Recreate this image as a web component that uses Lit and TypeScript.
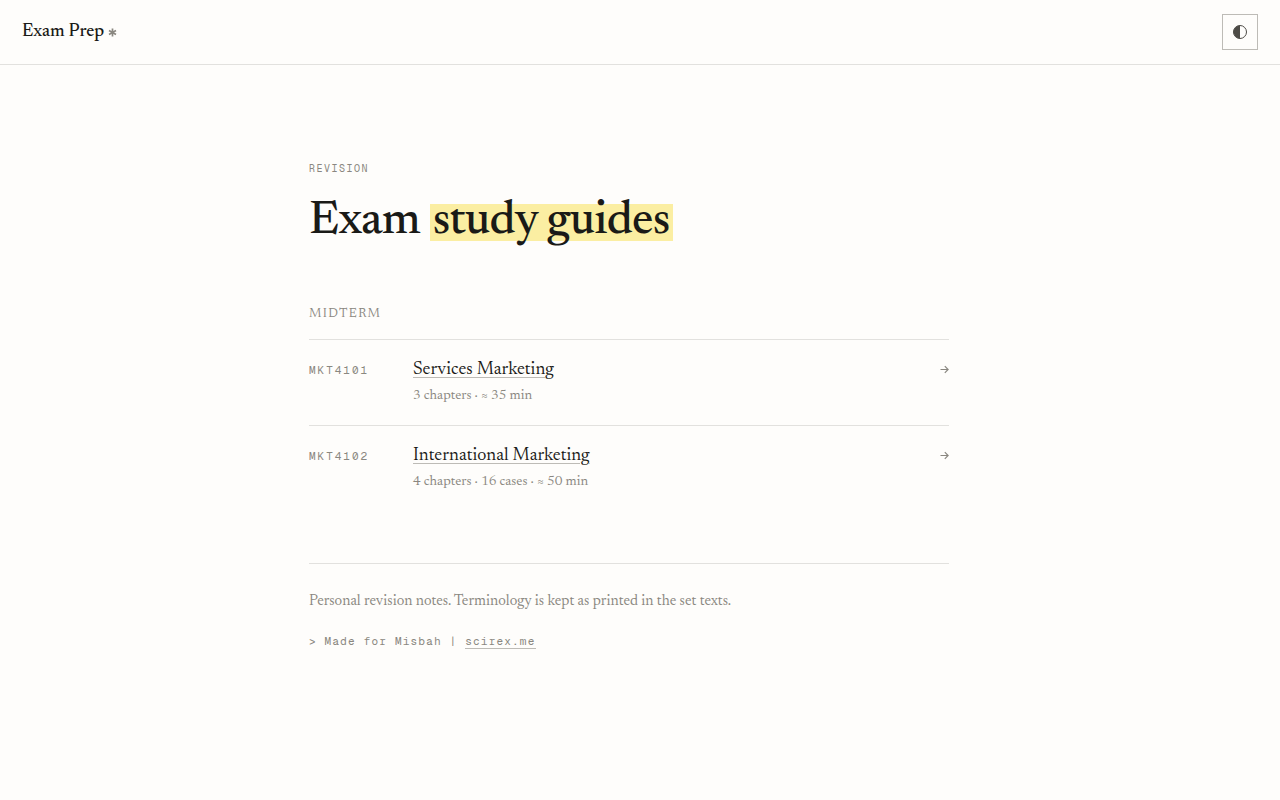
import { LitElement, html, css } from "lit";
import { customElement, state } from "lit/decorators.js";

interface Guide {
  code: string;
  title: string;
  meta: string;
}

const GUIDES: Guide[] = [
  { code: "MKT4101", title: "Services Marketing", meta: "3 chapters · ≈ 35 min" },
  { code: "MKT4102", title: "International Marketing", meta: "4 chapters · 16 cases · ≈ 50 min" },
];

@customElement("app-root")
export class AppRoot extends LitElement {
  @state() private dark = false;

  static styles = css`
    :host {
      --paper: #fefdfb;
      --ink: #1a1a17;
      --soft: #8a8780;
      --icon: #4d4b46;
      --rule: #e2e1de;
      --edge: #bdbbb6;
      --mark: #fbeea2;
      display: block;
    }
    .page {
      min-height: 100vh;
      box-sizing: border-box;
      background: var(--paper);
      color: var(--ink);
      font-family: Newsreader, "Liberation Serif", serif;
      font-size: 18px;
      line-height: 24px;
    }
    .page.dark {
      --paper: #171715;
      --ink: #eeece6;
      --icon: #c9c6bf;
      --rule: #33322f;
      --edge: #55534e;
      --mark: #5d5420;
    }
    .bar {
      display: flex;
      align-items: center;
      justify-content: space-between;
      padding: 14px 22px;
      border-bottom: 1px solid var(--rule);
    }
    .brand {
      display: flex;
      align-items: center;
      gap: 4px;
      color: inherit;
      text-decoration: none;
      font-size: 18px;
      font-weight: 500;
    }
    .star {
      width: 9px;
      height: 9px;
      color: var(--soft);
    }
    .toggle {
      display: grid;
      place-items: center;
      width: 36px;
      height: 36px;
      padding: 0;
      border: 1px solid var(--edge);
      background: none;
      color: var(--icon);
      cursor: pointer;
    }
    .toggle svg,
    .star,
    .arrow {
      display: block;
    }
    .wrap {
      padding: 96px 44px 96px 22px;
    }
    .column {
      max-width: 640px;
      margin: 0 auto;
    }
    .mono {
      font-family: "Geist Mono", "Liberation Mono", monospace;
      font-size: 11px;
      line-height: 16px;
      color: var(--soft);
    }
    .eyebrow {
      margin: 0 0 19px;
      font-size: 10px;
      letter-spacing: 0.15em;
      text-transform: uppercase;
    }
    h1 {
      margin: 0;
      font-size: 48px;
      line-height: 52px;
      font-weight: 500;
      letter-spacing: -0.015em;
    }
    mark {
      padding: 0 3px;
      color: inherit;
      background: linear-gradient(
        transparent 12%,
        var(--mark) 12%,
        var(--mark) 90%,
        transparent 90%
      );
    }
    h2 {
      margin: 54px 0 13px;
      font-size: 13px;
      line-height: 24px;
      font-weight: 400;
      letter-spacing: 0.1em;
      text-transform: uppercase;
      color: var(--soft);
    }
    .list {
      margin: 0;
      padding: 0;
      list-style: none;
    }
    .item {
      display: grid;
      grid-template-columns: 80px 1fr auto;
      column-gap: 24px;
      padding: 18px 0 17px;
      border-top: 1px solid var(--rule);
    }
    .code {
      padding-top: 4px;
      letter-spacing: 0.18em;
    }
    .title {
      color: inherit;
      text-decoration: underline;
      text-decoration-thickness: 1px;
      text-decoration-color: var(--edge);
      text-underline-offset: 3px;
    }
    .meta {
      margin: 2px 0 0;
      font-size: 14px;
      color: var(--soft);
    }
    .arrow {
      width: 9px;
      height: 9px;
      margin-top: 7px;
      color: var(--soft);
    }
    .foot {
      margin-top: 52px;
      padding-top: 26px;
      border-top: 1px solid var(--rule);
      color: var(--soft);
      font-size: 15px;
    }
    .foot p {
      margin: 0;
    }
    .foot .credit {
      margin-top: 19px;
      letter-spacing: 0.11em;
    }
    .credit a {
      color: inherit;
      text-decoration: none;
      border-bottom: 1px solid var(--edge);
    }
  `;

  render() {
    return html`
      <div class="page ${this.dark ? "dark" : ""}">
        <header class="bar">
          <a class="brand" href="#">
            <span>Exam Prep</span>
            <svg class="star" viewBox="0 0 9 9" aria-hidden="true">
              <path d="M4.5 .5v8M1 2.5l7 4M8 2.5l-7 4" stroke="currentColor" stroke-width="1.7" />
            </svg>
          </a>
          <button
            class="toggle"
            type="button"
            aria-label="Toggle theme"
            @click=${() => (this.dark = !this.dark)}
          >
            <svg width="16" height="16" viewBox="0 0 16 16" aria-hidden="true">
              <circle cx="8" cy="8" r="6.5" fill="none" stroke="currentColor" />
              <path d="M8 1.5a6.5 6.5 0 0 0 0 13z" fill="currentColor" />
            </svg>
          </button>
        </header>
        <main class="wrap">
          <div class="column">
            <p class="mono eyebrow">Revision</p>
            <h1>Exam <mark>study guides</mark></h1>
            <section>
              <h2>Midterm</h2>
              <ul class="list">
                ${GUIDES.map(
                  (g) => html`
                    <li class="item">
                      <span class="mono code">${g.code}</span>
                      <div>
                        <a class="title" href="#${g.code}">${g.title}</a>
                        <p class="meta">${g.meta}</p>
                      </div>
                      <svg class="arrow" viewBox="0 0 9 9" aria-hidden="true">
                        <path
                          d="M.5 4.5h7.5M4.8 1.2l3.3 3.3-3.3 3.3"
                          fill="none"
                          stroke="currentColor"
                          stroke-width="1.2"
                        />
                      </svg>
                    </li>
                  `,
                )}
              </ul>
            </section>
            <footer class="foot">
              <p>Personal revision notes. Terminology is kept as printed in the set texts.</p>
              <p class="mono credit">&gt; Made for Misbah | <a href="#scirex">scirex.me</a></p>
            </footer>
          </div>
        </main>
      </div>
    `;
  }
}
